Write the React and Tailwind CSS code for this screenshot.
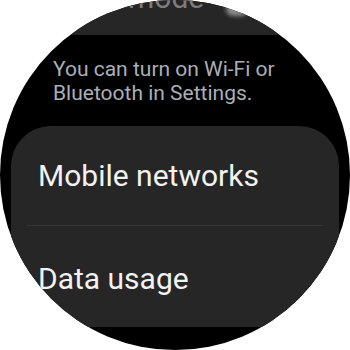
export default function App() {
  return (
    <div className="w-[350px] h-[350px] bg-white" style={{ fontFamily: "Roboto, 'Noto Sans', sans-serif" }}>
      <div className="relative w-[350px] h-[350px] rounded-full overflow-hidden bg-black">
        {/* previous item, scrolled mostly out of view */}
        <div className="relative h-[35px] bg-[#262626] overflow-hidden">
          <p className="absolute left-[128px] top-[-18px] text-[30px] text-[#7d7d7d] leading-8">mode</p>
          <div className="absolute left-[226px] top-[2px] w-[22px] h-[14px] rounded-full bg-[#cfcfcf] opacity-60 blur-[2px]" />
        </div>

        <p className="mt-[22px] pl-[53px] pr-[20px] text-[21px] leading-6 text-[#abafb5]">
          You can turn on Wi-Fi or
          <br />
          Bluetooth in Settings.
        </p>

        <div className="mt-[21px] mx-[11px] bg-[#262626] rounded-[40px]">
          <div className="h-[99px] flex items-center px-[27px] text-[30px] text-[#f2f2f2]">
            Mobile networks
          </div>
          <div className="mx-[16px] h-px bg-[#363636]" />
          <div className="h-[101px] flex items-center pt-[3px] px-[27px] text-[30px] text-[#f2f2f2]">
            Data usage
          </div>
        </div>
      </div>
    </div>
  );
}
